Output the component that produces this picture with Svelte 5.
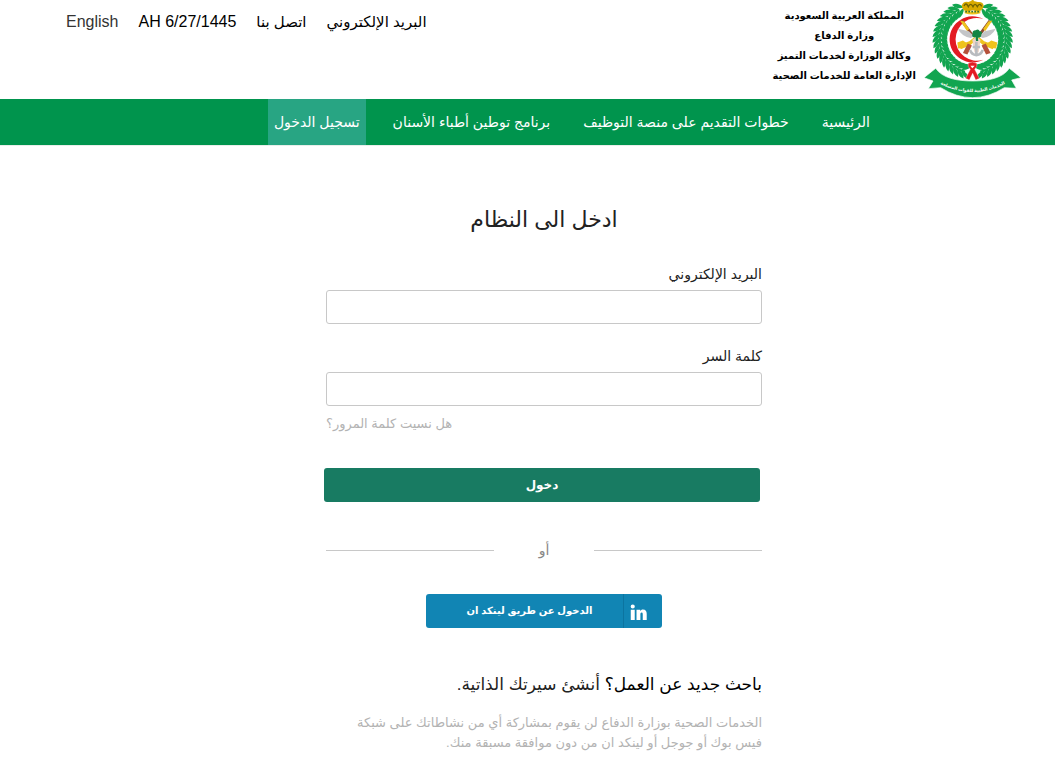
<script>
  const topLinks = [
    { text: 'البريد الإلكتروني' },
    { text: 'اتصل بنا' },
    { text: 'AH 6/27/1445', dir: 'ltr', plain: true },
    { text: 'English', dir: 'ltr', soft: true }
  ];
  const nav = [
    { text: 'الرئيسية' },
    { text: 'خطوات التقديم على منصة التوظيف' },
    { text: 'برنامج توطين أطباء الأسنان' },
    { text: 'تسجيل الدخول', active: true }
  ];
  let email = $state('');
  let password = $state('');

  // Wreath leaves: inner and outer rows fan out from a stem on each side
  const leaves = [];
  for (const side of [-1, 1]) {
    for (let i = 0; i < 19; i++) {
      const a = 12 + i * 8;
      for (const [r, tilt] of [[86, -38], [109, 38]]) {
        const t = (a * Math.PI) / 180;
        const x = 173 + side * Math.sin(t) * r;
        const y = 118 + Math.cos(t) * r;
        leaves.push({ x, y, rot: side === 1 ? -a - tilt : 180 + a + tilt });
      }
    }
  }
</script>

<div class="page" dir="rtl">
  <header>
    <div class="brand">
      <svg class="emblem" viewBox="27 0 291 294" role="img" aria-label="الخدمات الصحية">
        <g fill="#12a550">
          {#each leaves as l}
            <path d="M-18 0Q-2-12 18 0Q-2 12-18 0Z" transform="translate({l.x} {l.y}) rotate({l.rot})" />
          {/each}
        </g>
        <path d="M150 215A99 99 0 0 1 132 29M196 215A99 99 0 0 0 214 29" fill="none" stroke="#12a550" stroke-width="6" />
        <circle cx="173" cy="119" r="71" fill="#fff" />
        <path d="M205 57A69 69 0 1 0 205 179A64 64 0 1 1 205 57Z" fill="#e31b23" />
        <g transform="translate(183 114) scale(1.12) translate(-182 -116)">
          <path d="M141 72l6-4 28 38-5 6zM222 72l-6-4-28 38 5 6z" fill="#8f4a2c" />
          <path d="M139 69l11 3 14 20-6 5zM226 69l-11 3-14 20 6 5z" fill="#efc31d" />
          <path d="M133 91l30 7 14 13-9 5q-23-3-35-25zM235 91l-30 7-14 13 9 5q23-3 35-25z" fill="#c3c5c8" />
          <path d="M138 134l26-9 14-12 6 7-18 16-25 10zM230 134l-26-9-14-12-6 7 18 16 25 10z" fill="#efc31d" />
          <path d="M132 128l15-5 9 6-8 14-14 1zM239 128l-16-5-9 6 8 14 14 1z" fill="#efc31d" />
          <path d="M147 156l13-25 11 5-12 24zM221 156l-13-25-11 5 12 24z" fill="#b5513b" />
          <path d="M172 121l11-8 11 8-5 34h-11z" fill="#ecd4c8" />
          <path d="M183 126v36m-10-22h20m-27 8q4 13 17 14 13-1 17-14" fill="none" stroke="#b8bbbf" stroke-width="7" />
          <path d="M181 114q-13 0-8-9-2-9 8-10 8-5 11 3 10 1 4 9 1 8-9 8l1 9h-6z" fill="#138543" />
        </g>
        <path d="M173 31q-28 10-33-13 4-15 20-12l10-4V0h6v3l12 3q17-2 18 12-5 23-33 13z" fill="#d8aa00" />
        <path d="M147 18q6-13 13 2 7-14 14 0 6-14 13 0 7-13 13-1" fill="none" stroke="#6f6300" stroke-width="4" />
        <path d="M149 31q24 8 47 0v9q-24 7-47 0z" fill="#efc31d" />
        <path d="M151 35h43" stroke="#39772f" stroke-width="5" stroke-dasharray="5 4" />
        <path d="M62 205C82 234 125 243 173 243C221 243 264 234 283 205L318 233L290 240L304 265L268 263Q173 323 77 263L40 266L54 243L27 233Z" fill="#12a550" stroke="#fff" stroke-width="2" />
        <path d="M160 190q12-8 25 0 4 9-6 18l14 27-11 5-9-20-10 20-11-5 14-27q-10-9-6-18z" fill="#e31b23" stroke="#fff" stroke-width="1" />
        <path d="M166 197h13l-7 8z" fill="#fff" />
        <path id="ribbon" d="M66 247Q173 305 280 247" fill="none" />
        <text class="motto"><textPath href="#ribbon" startOffset="50%">الخدمات الطبية للقوات المسلحة</textPath></text>
      </svg>
      <div class="ministry">
        <span>المملكة العربية السعودية</span>
        <span>وزارة الدفاع</span>
        <span>وكالة الوزارة لخدمات التميز</span>
        <span>الإدارة العامة للخدمات الصحية</span>
      </div>
    </div>
    <div class="top-links">
      {#each topLinks as l}
        {#if l.plain}
          <span class="latin" dir="ltr">{l.text}</span>
        {:else}
          <a href="#top" class:soft={l.soft} class:latin={l.dir} dir={l.dir}>{l.text}</a>
        {/if}
      {/each}
    </div>
  </header>

  <nav>
    {#each nav as n}
      <a href="#nav" class:active={n.active}>{n.text}</a>
    {/each}
  </nav>

  <main>
    <form onsubmit={(e) => e.preventDefault()}>
      <h1>ادخل الى النظام</h1>
      <label for="email">البريد الإلكتروني</label>
      <input id="email" type="email" bind:value={email} />
      <label for="password">كلمة السر</label>
      <input id="password" type="password" bind:value={password} />
      <a class="forgot" href="#forgot">هل نسيت كلمة المرور؟</a>
      <button class="login" type="submit">دخول</button>
      <div class="or"><span>أو</span></div>
      <button class="linkedin" type="button">
        <span class="mark">
          <svg viewBox="0 0 18 18" aria-hidden="true">
            <path d="M0.800 6h4.200v11H0.800zM2.900 0.400a2.200 2.200 0 1 1 0 4.400a2.200 2.200 0 1 1 0-4.400zM6.900 6h3.900v1.500C11.400 6.400 12.400 5.700 13.700 5.700C16.600 5.700 17.700 7.500 17.700 10.300V17h-4.200v-6c0-1.400-.4-2.100-1.200-2.100c-.9 0-1.300.8-1.300 2.100v6H6.900z" fill="#fff" />
          </svg>
        </span>
        <span class="caption">الدخول عن طريق لينكد ان</span>
      </button>
      <p class="signup">باحث جديد عن العمل؟ <a href="#signup">أنشئ سيرتك الذاتية.</a></p>
      <p class="note">
        الخدمات الصحية بوزارة الدفاع لن يقوم بمشاركة أي من نشاطاتك على شبكة<br />
        فيس بوك أو جوجل أو لينكد ان من دون موافقة مسبقة منك.
      </p>
    </form>
  </main>
</div>

<style>
  :global(body) { margin: 0; background: #fff; }
  .page {
    font-family: "Liberation Sans", "DejaVu Sans", sans-serif;
    font-size: 14px;
    line-height: 20px;
    color: #222;
  }
  a { color: inherit; text-decoration: none; }
  header {
    display: flex;
    justify-content: space-between;
    align-items: flex-start;
    padding: 0 34px 0 66px;
  }
  .brand { display: flex; gap: 8px; height: 99px; }
  .emblem { width: 97px; height: 98px; }
  .motto { font-size: 13px; font-weight: 700; fill: #fff; text-anchor: middle; }
  .ministry {
    display: flex;
    flex-direction: column;
    align-items: center;
    padding-top: 6px;
    font-size: 10px;
    font-weight: 700;
    color: #000;
    white-space: nowrap;
  }
  .top-links {
    display: flex;
    gap: 20px;
    padding-top: 12px;
    font-size: 15px;
    color: #000;
    white-space: nowrap;
  }
  .latin { font-size: 16px; }
  .soft { color: #333; }
  nav {
    display: flex;
    gap: 21px;
    padding-right: 179px;
    background: #00944d;
    border-bottom: 1px solid #e8eeea;
    color: #fff;
    white-space: nowrap;
  }
  nav a { padding: 13px 6px; }
  nav .active { background: #28a583; }
  main { display: flex; justify-content: center; padding-left: 33px; }
  form { display: flex; flex-direction: column; width: 100%; max-width: 436px; }
  h1 {
    margin: 56px 0 26px;
    font-size: 22px;
    line-height: 36px;
    font-weight: 400;
    text-align: center;
  }
  input {
    box-sizing: border-box;
    height: 34px;
    margin: 6px 0 22px;
    padding: 6px 12px;
    border: 1px solid #c8c8c8;
    border-radius: 3px;
    background: #fff;
    font: inherit;
  }
  #password { margin-bottom: 8px; }
  .forgot { align-self: flex-end; font-size: 13px; color: #b3b3b3; }
  button {
    border: 0;
    border-radius: 3px;
    color: #fff;
    font-family: inherit;
    font-weight: 700;
    cursor: pointer;
  }
  .login {
    height: 34px;
    margin: 34px 2px 0 -2px;
    padding: 0;
    background: #187b62;
    font-size: 12px;
  }
  .or {
    display: flex;
    align-items: center;
    margin: 38px 0 34px;
    color: #888;
  }
  .or::before, .or::after { content: ""; flex: 1; height: 1px; background: #c8c8c8; }
  .or span { width: 100px; text-align: center; }
  .linkedin {
    display: flex;
    align-self: center;
    width: 236px;
    height: 34px;
    padding: 0;
    background: #1185b4;
    font-size: 10px;
  }
  .mark {
    box-sizing: border-box;
    display: flex;
    align-items: center;
    width: 39px;
    height: 34px;
    padding: 2px 15px 0 6px;
    border-left: 1px solid #0c74a0;
  }
  .mark svg { width: 17px; height: 17px; }
  .caption { flex: 1; padding-left: 10px; line-height: 34px; text-align: center; }
  p { margin: 0; white-space: nowrap; }
  .signup { margin-top: 44px; font-size: 17px; line-height: 26px; color: #000; }
  .signup a { color: #222; }
  .note { margin: 15px 0 28px; font-size: 13px; color: #b3b3b3; }
</style>
